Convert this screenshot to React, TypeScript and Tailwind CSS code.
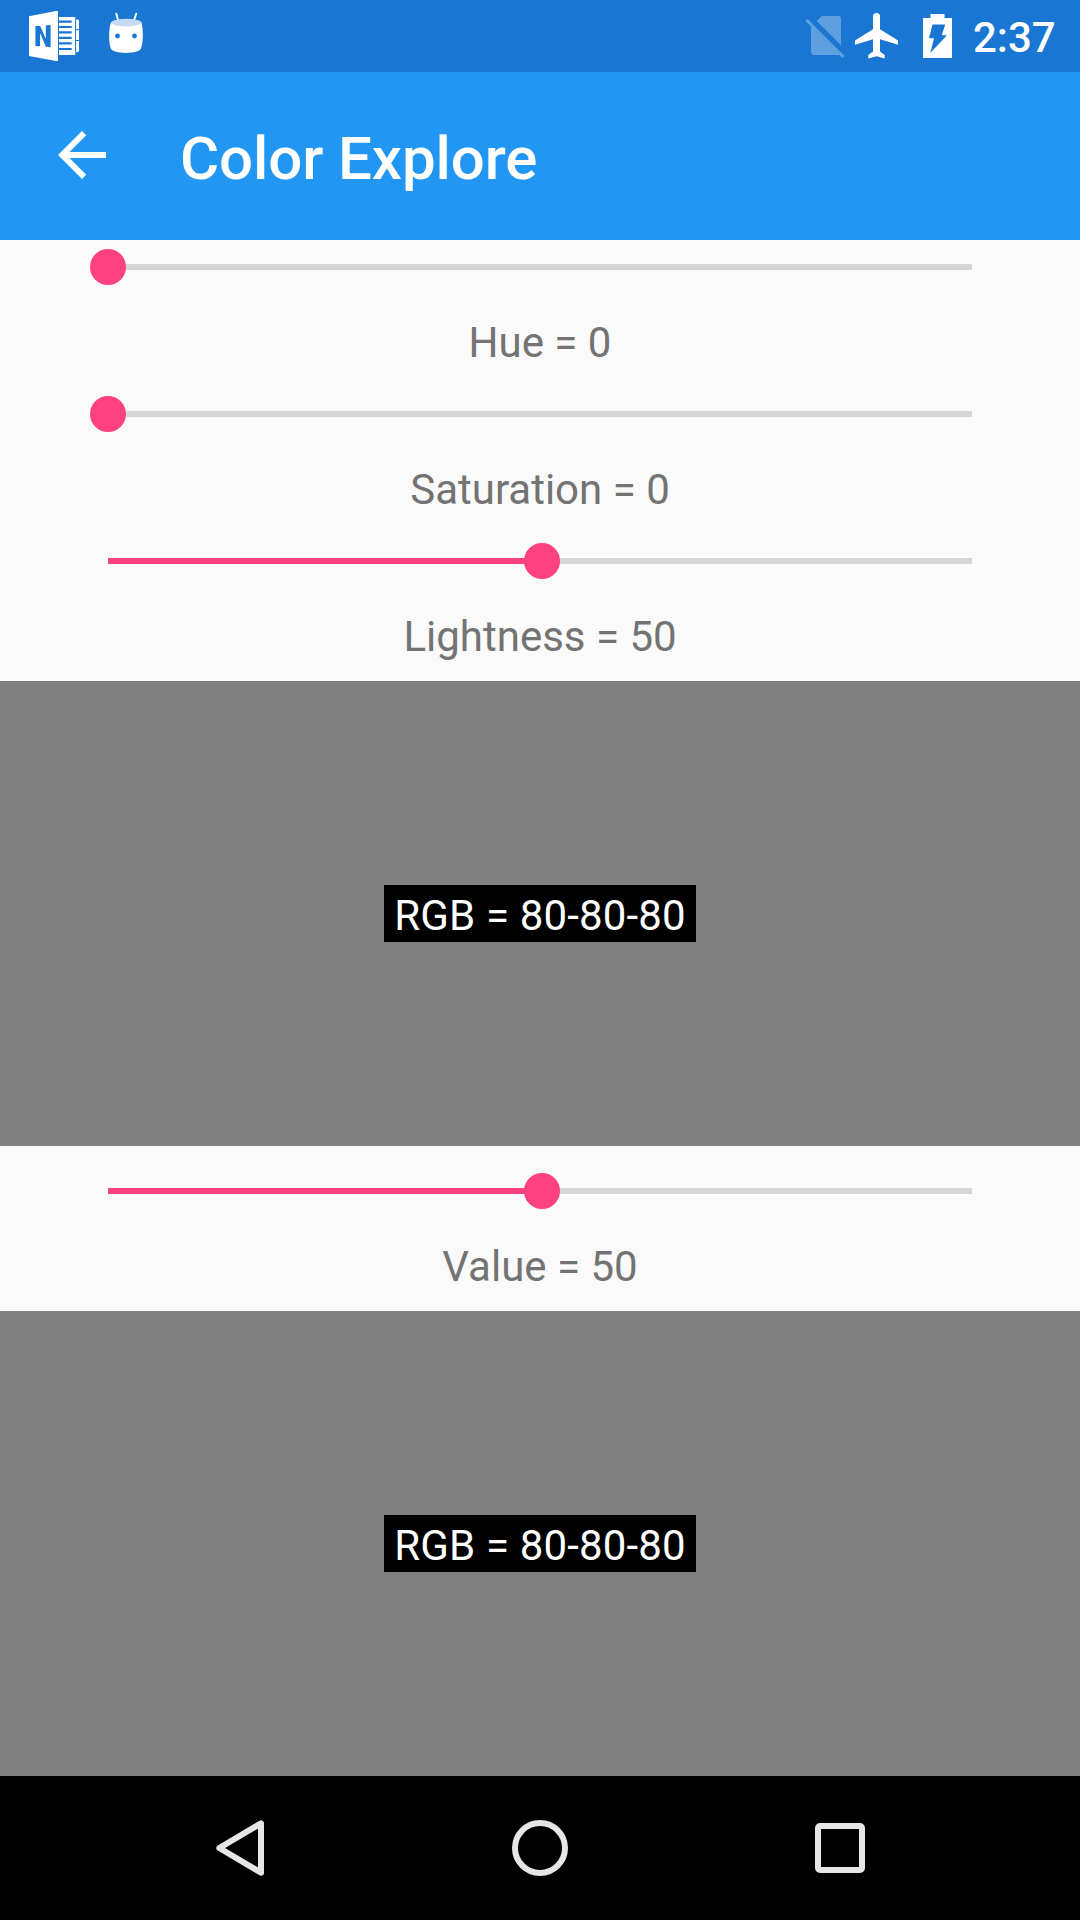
import React from "react";

function OneNoteIcon() {
  return (
    <svg className="ml-[29px] h-[52px] w-[50px] shrink-0" viewBox="29 10 50 52">
      <path fill="#fff" d="M29 16.2L56 11h2v50h-2L29 56z" />
      <path fill="#1976d2" d="M35.4 26h4.800l5.600 13V25.4l4.8-.5v22.3l-4.7-.4-5.8-13.8V46.3l-4.7-.3z" />
      <path fill="#fff" d="M59 17h15q1.500 0 1.500 1.500v1H77.500q1.500 0 1.500 1.500V50.500q0 1.500-1.500 1.500H75.500v1.500q0 1.500-1.500 1.500H59z" />
      <path stroke="#1976d2" strokeWidth="2.200" d="M59 21.700h12.700M59 27h12.700M59 32.400h12.700M59 37.800h12.700M59 43.300h12.700M59 49h12.700" />
      <path stroke="#1976d2" strokeWidth="1" fill="none" d="M75.600 19v33M75.600 29.700H79M75.600 40.500H79" />
    </svg>
  );
}

function RobotIcon() {
  return (
    <svg className="ml-[29px] h-[42px] w-[36px] shrink-0" viewBox="108 12 36 42">
      <path d="M116.300 13.800l2.200 8M136.200 13.800l-2.700 8" stroke="#fff" strokeWidth="2" strokeLinecap="round" />
      <path fill="#fff" d="M111 22.500h30.500C143.200 29 143.500 41 141.200 48c-1.500 6.500-29 6.500-30.500 0-2.300-7-2-19 .3-25.500z" />
      <ellipse cx="126.300" cy="22.600" rx="15.300" ry="3.800" fill="#c5daf3" />
      <circle cx="117.500" cy="36" r="2.400" fill="#1976d2" />
      <circle cx="134.500" cy="36" r="2.400" fill="#1976d2" />
    </svg>
  );
}

function StatusBar() {
  return (
    <header className="flex h-[72px] shrink-0 items-start bg-[#1976d2] text-white">
      <div className="flex flex-1 items-start">
        <div className="pt-[10px]"><OneNoteIcon /></div>
        <div className="pt-[12px]"><RobotIcon /></div>
      </div>
      <svg className="mt-[15px] h-[44px] w-[40px]" viewBox="805 15 40 44">
        <path fill="#5e9fe0" d="M822 16h16q3 0 3 3v26.300L816.700 21zM811 24.500L840.500 54q-1 1-2.500 1H814q-3 0-3-3z" />
        <path stroke="#5e9fe0" strokeWidth="3" d="M806.500 20l37 37" />
      </svg>
      <svg className="ml-[10px] mt-[13px] h-[46px] w-[43px]" viewBox="855 13 43 46">
        <path fill="#fff" d="M898 44.800v-4.400L880 29.200V16.500a3.500 3.500 0 0 0-7 0v12.700L855 40.400v4.400l18-5.600v12.200l-4.700 3.500v3.700l8.200-2.300 8.200 2.300v-3.700L880 51.400V39.200z" />
      </svg>
      <svg className="ml-[25px] mt-[14px] h-[44px] w-[29px]" viewBox="923 14 29 44">
        <path fill="#fff" d="M930.500 14h14v4h7.500v40h-29V18h7.500z" />
        <path fill="#1976d2" d="M932.500 24.500h12.700l-3.500 10.700h5.300L930.300 53l3.700-14.700h-5z" />
      </svg>
      <time className="ml-[21px] mr-[26px] mt-[17px] w-[81px] whitespace-nowrap text-[42px] leading-[42px] font-medium">2:37</time>
    </header>
  );
}

function AppBar() {
  return (
    <div className="flex h-[168px] shrink-0 items-center bg-[#2196f3] text-white">
      <svg className="mb-[2px] ml-[46px] size-[72px]" viewBox="0 0 24 24" fill="currentColor">
        <path d="M20 11H7.830l5.590-5.590L12 4l-8 8 8 8 1.410-1.410L7.830 13H20v-2z" />
      </svg>
      <h1 className="ml-[62px] pt-[5px] text-[60px] leading-[60px] font-medium tracking-[-0.1px]">Color Explore</h1>
    </div>
  );
}

function SliderRow({ label, value }: { label: string; value: number }) {
  return (
    <section className="h-[147px] shrink-0">
      <div className="flex h-[54px] items-center px-[108px]">
        <div className="relative h-[6px] w-full bg-[#d6d6d6]">
          <div className="h-full bg-[#ff4081]" style={{ width: `${value}%` }} />
          <div
            className="absolute top-1/2 size-[36px] -translate-x-1/2 -translate-y-1/2 rounded-full bg-[#ff4081]"
            style={{ left: `${value}%` }}
          />
        </div>
      </div>
      <p className="pt-[20px] text-center text-[42px] leading-[57px] text-[#737373]">{label}</p>
    </section>
  );
}

function Swatch() {
  return (
    <div className="flex h-[465px] shrink-0 items-center justify-center bg-[#808080]">
      <div className="h-[57px] w-[312px] bg-black pt-[2px] text-center text-[42px] leading-[57px] tracking-[0.15px] whitespace-nowrap text-white">
        RGB = 80-80-80
      </div>
    </div>
  );
}

function NavBar() {
  return (
    <nav className="flex h-[144px] shrink-0 items-center bg-black pl-[213px]">
      <svg className="h-[60px] w-[54px]" viewBox="0 0 54 60" fill="none" stroke="#e6e6e6" strokeWidth="6" strokeLinejoin="round">
        <path d="M48 5.300v49.400L6.300 30z" />
      </svg>
      <div className="ml-[245px] size-[56px] rounded-full border-[6px] border-[#e6e6e6]" />
      <div className="ml-[247px] size-[50px] rounded-[5px] border-[6px] border-[#e6e6e6]" />
    </nav>
  );
}

export default function App() {
  return (
    <main className="flex h-[1920px] w-[1080px] flex-col overflow-hidden bg-[#fafafa] font-['Roboto',sans-serif]">
      <StatusBar />
      <AppBar />
      <SliderRow label="Hue = 0" value={0} />
      <SliderRow label="Saturation = 0" value={0} />
      <SliderRow label="Lightness = 50" value={50.2} />
      <Swatch />
      <div className="h-[165px] shrink-0 pt-[18px]">
        <SliderRow label="Value = 50" value={50.2} />
      </div>
      <Swatch />
      <NavBar />
    </main>
  );
}
